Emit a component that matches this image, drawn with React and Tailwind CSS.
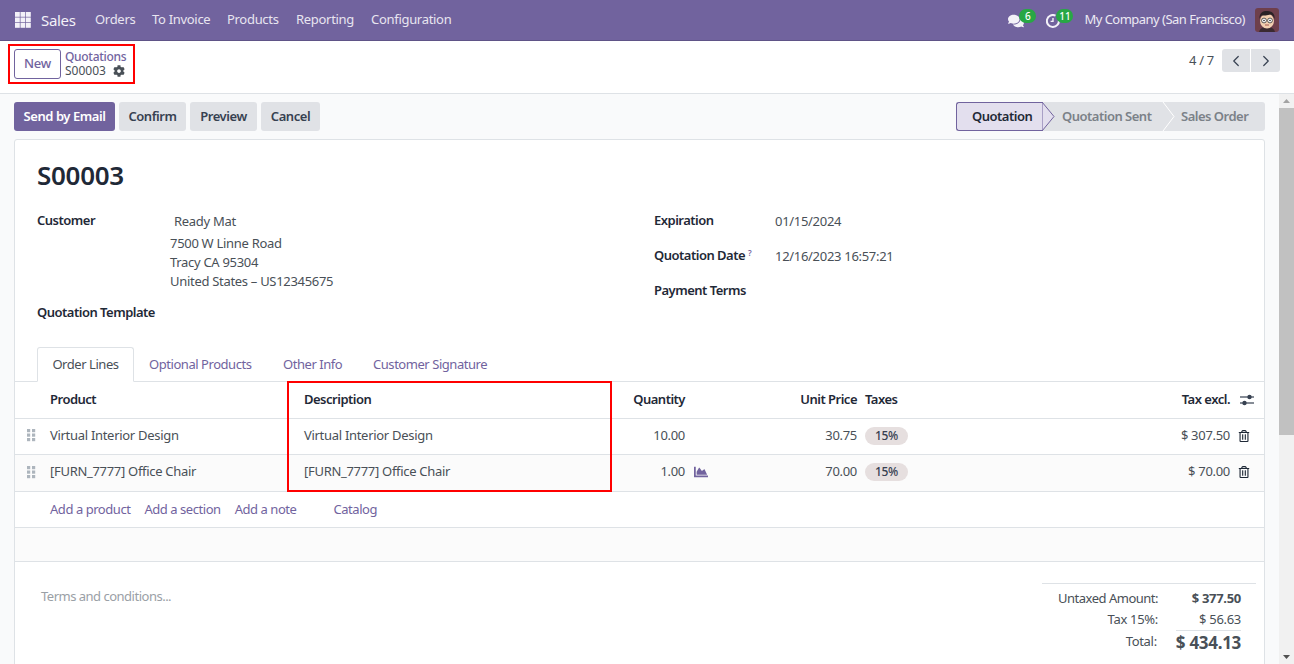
import { ChevronLeft, ChevronRight } from 'lucide-react'
import { FaCog, FaComments, FaRegTrashAlt, FaChartArea } from 'react-icons/fa'

function AppsIcon() {
  return (
    <svg width="16" height="16" viewBox="0 0 16 16" fill="#f3f1f8">
      {[0, 5.5, 11].map((y) =>
        [0, 5.5, 11].map((x) => <rect key={`${x}-${y}`} x={x} y={y} width="4.8" height="4.8" />)
      )}
    </svg>
  )
}

function DragHandle() {
  return (
    <svg width="9" height="13" viewBox="0 0 9 13" fill="#adb5bd" className="block">
      {[0, 4.5, 9].map((y) =>
        [0, 5].map((x) => <rect key={`${x}-${y}`} x={x} y={y} width="3.2" height="3.2" />)
      )}
    </svg>
  )
}

function ClockIcon() {
  return (
    <svg width="14" height="14" viewBox="0 0 14 14" fill="none" stroke="#f3f1f8" strokeWidth="2" className="block">
      <path d="M9.5 1.6A6 6 0 1 0 12.8 6" />
      <path d="M7 4v3.4H4.6" strokeWidth="1.4" />
    </svg>
  )
}

function SlidersIcon() {
  return (
    <svg width="14" height="12" viewBox="0 0 14 12" fill="#374151" className="block">
      <rect x="0" y="2.400" width="14" height="1.200" />
      <rect x="0" y="8.400" width="14" height="1.200" />
      <circle cx="9.500" cy="3" r="2.200" />
      <circle cx="4.500" cy="9" r="2.200" />
    </svg>
  )
}

function Avatar() {
  return (
    <svg width="24" height="24" viewBox="0 0 24 24" className="rounded-[3px]">
      <rect width="24" height="24" fill="#6e3f4c" />
      <path d="M4 24c1-4 4-5 8-5s7 1 8 5z" fill="#3a2a30" />
      <ellipse cx="12" cy="13" rx="7" ry="7.5" fill="#f2cfb0" />
      <path d="M4.5 11C4 4 9 2.5 13 3c5 .3 7 4 6.5 8-1-2.500-2-4-4-4.500-3 1-7 1-9 1-1 .8-1.500 2-2 3.500z" fill="#2a2226" />
      <circle cx="9" cy="12.500" r="2.400" fill="#fff" stroke="#333" strokeWidth=".8" />
      <circle cx="15" cy="12.500" r="2.400" fill="#fff" stroke="#333" strokeWidth=".8" />
      <circle cx="9" cy="12.500" r=".8" fill="#222" />
      <circle cx="15" cy="12.500" r=".8" fill="#222" />
      <path d="M10 17h4" stroke="#a5574f" strokeWidth="1" />
    </svg>
  )
}

function Badge({ children, className }) {
  return (
    <span className={`absolute rounded-full bg-[#28a745] text-white text-[10px] leading-[14px] h-[14px] w-[17px] text-center font-medium tracking-normal ${className}`}>
      {children}
    </span>
  )
}

function NavBar() {
  return (
    <header className="h-[41px] shrink-0 bg-[#71639e] border-b border-[#5f5387] flex items-center text-white">
      <div className="pl-[15px] pr-[10px]"><AppsIcon /></div>
      <span className="text-[15px] text-[#f3f1f8] w-[54px]">Sales</span>
      <nav className="flex text-[13px] text-[#e8e5f0]">
        <span className="w-[57px]">Orders</span>
        <span className="w-[75px]">To Invoice</span>
        <span className="w-[69px]">Products</span>
        <span className="w-[75px]">Reporting</span>
        <span>Configuration</span>
      </nav>
      <div className="ml-auto flex items-center text-[13px] text-[#ece9f3]">
        <span className="relative mr-[22px] text-[#f3f1f8] mt-[1px]">
          <FaComments size={16} className="block" />
          <Badge className="left-[11px] -top-[4px]">6</Badge>
        </span>
        <span className="relative mr-[24px] mt-[2px]">
          <ClockIcon />
          <Badge className="left-[10px] -top-[5px]">11</Badge>
        </span>
        <span className="mr-[10px] tracking-[-0.52px]">My Company (San Francisco)</span>
        <span className="mr-[15px] flex"><Avatar /></span>
      </div>
    </header>
  )
}

function ControlPanel() {
  return (
    <div className="h-[53px] shrink-0 bg-white border-b border-[#dee2e6] flex items-start pl-[8px] pr-[14px] pt-[3px]">
      <div className="h-[40px] w-[127px] border-[2px] border-[#f00] flex items-center pl-[4px]">
        <button className="h-[30px] w-[47px] rounded-[3px] border border-[#71639e] bg-white text-[#71639e] text-[13px] font-medium">New</button>
        <div className="ml-[4px] text-[12px] leading-[14px]">
          <div className="text-[#71639e] font-medium">Quotations</div>
          <div className="flex items-center text-[#495057] tracking-normal">
            S00003 <FaCog size={12} className="ml-[7px] text-[#495057]" />
          </div>
        </div>
      </div>
      <div className="ml-auto flex items-center mt-[5px] text-[13px] text-[#495057]">
        <span className="mr-[8px]">4 / 7</span>
        <button className="w-[29px] h-[23px] bg-[#e0e2e6] rounded-l-[3px] flex items-center justify-center border-r border-white">
          <ChevronLeft size={18} strokeWidth={1.6} className="text-[#374151]" />
        </button>
        <button className="w-[29px] h-[23px] bg-[#e0e2e6] rounded-r-[3px] flex items-center justify-center">
          <ChevronRight size={18} strokeWidth={1.6} className="text-[#374151]" />
        </button>
      </div>
    </div>
  )
}

function ActionBar() {
  const btn = 'h-[29px] rounded-[3px] text-[13px] font-semibold tracking-[-0.45px] bg-[#e0e2e6] text-[#374151]'
  return (
    <div className="flex items-center justify-between h-[29px]">
      <div className="flex gap-[4px]">
        <button className="h-[29px] w-[101px] rounded-[3px] text-[13px] font-semibold tracking-[-0.45px] bg-[#71639e] text-white">Send by Email</button>
        <button className={`${btn} w-[67px]`}>Confirm</button>
        <button className={`${btn} w-[67px]`}>Preview</button>
        <button className={`${btn} w-[59px]`}>Cancel</button>
      </div>
      <div className="flex h-[29px] w-[309px] rounded-[3px] bg-[#e0e2e6] text-[13px] font-semibold tracking-[-0.5px] text-[#7b8188]">
        <div className="relative w-[87px] bg-[#e3dfee] border border-[#71639e] border-r-0 rounded-l-[3px] flex items-center pl-[15px] text-[#1f2937]">
          Quotation
          <svg width="13" height="29" viewBox="0 0 13 29" className="absolute -right-[12px] -top-[1px]">
            <path d="M0 0 L12 14.500 L0 29 Z" fill="#e3dfee" stroke="#71639e" />
          </svg>
        </div>
        <div className="relative flex items-center pl-[19px] w-[132px]">
          Quotation Sent
          <svg width="13" height="29" viewBox="0 0 13 29" className="absolute right-0 top-0">
            <path d="M1 0 L12 14.500 L1 29" fill="none" stroke="#fff" />
          </svg>
        </div>
        <div className="flex items-center pl-[6px]">Sales Order</div>
      </div>
    </div>
  )
}

function OrderHeader() {
  const label = 'text-[13px] font-semibold tracking-[-0.5px] text-[#1f2937]'
  return (
    <div className="flex pl-[22px] text-[13px] text-[#495057]">
      <div className="w-[617px]">
        <div className="flex items-start">
          <span className={`${label} w-[133px] -mt-[1px]`}>Customer</span>
          <div className="leading-[19px]">
            <div className="pl-[4px] h-[22px]">Ready Mat</div>
            <div>7500 W Linne Road</div>
            <div>Tracy CA 95304</div>
            <div>United States – US12345675</div>
          </div>
        </div>
        <div className={`${label} mt-[12px]`}>Quotation Template</div>
      </div>
      <div className="-mt-[1px] flex flex-col gap-[15px]">
        <div className="flex items-start h-[20px]">
          <span className={`${label} w-[121px]`}>Expiration</span>
          <span className="mt-[1px]">01/15/2024</span>
        </div>
        <div className="flex items-start h-[20px]">
          <span className={`${label} w-[121px]`}>Quotation Date <sup className="text-[#71639e] text-[8px] leading-none">?</sup></span>
          <span className="mt-[1px]">12/16/2023 16:57:21</span>
        </div>
        <div className={`${label} h-[20px]`}>Payment Terms</div>
      </div>
    </div>
  )
}

function Tabs() {
  return (
    <div className="mt-[24px] h-[35px] border-b border-[#dee2e6] flex items-end pl-[22px] text-[13px] text-[#71639e] tracking-[-0.45px]">
      <div className="h-[35px] w-[97px] -mb-[1px] pt-[2px] border border-[#dee2e6] border-b-white bg-white rounded-t-[3px] flex items-center justify-center text-[#495057]">Order Lines</div>
      <div className="h-[34px] pt-[2px] flex items-center pl-[15px] w-[149px]">Optional Products</div>
      <div className="h-[34px] pt-[2px] flex items-center w-[90px]">Other Info</div>
      <div className="h-[34px] pt-[2px] flex items-center">Customer Signature</div>
    </div>
  )
}

function LineRow({ product, qty, price, total, forecast, stripe, height }) {
  return (
    <tr className={`${height} border-b border-[#dee2e6] ${stripe ? 'bg-[#fbfbfb]' : ''} text-[#495057] [&>td]:pb-[2px]`}>
      <td className="pl-[12px]"><DragHandle /></td>
      <td className="pl-[7px]">{product}</td>
      <td className="pl-[10px]">{product}</td>
      <td className="text-right">{qty}</td>
      <td className="pl-[9px]">{forecast && <FaChartArea size={14} className="text-[#71639e]" />}</td>
      <td className="text-right">{price}</td>
      <td className="pl-[8px]">
        <span className="inline-flex h-[18px] w-[43px] items-center justify-center rounded-full bg-[#e6dfdf] text-[12px] font-medium text-[#374151]">15%</span>
      </td>
      <td className="text-right">{total}</td>
      <td className="pl-[8px]"><FaRegTrashAlt size={12} className="text-[#1f2937]" /></td>
    </tr>
  )
}

function OrderLines() {
  return (
    <div className="relative">
      <table className="w-full table-fixed border-collapse text-[13px]">
        <colgroup>
          <col className="w-[28px]" />
          <col className="w-[251px]" />
          <col className="w-[303px]" />
          <col className="w-[88px]" />
          <col className="w-[28px]" />
          <col className="w-[144px]" />
          <col className="w-[70px]" />
          <col />
          <col className="w-[34px]" />
        </colgroup>
        <thead>
          <tr className="h-[37px] border-b border-[#dee2e6] text-[#1f2937] tracking-[-0.5px]">
            <th />
            <th className="pl-[7px] text-left font-semibold">Product</th>
            <th className="pl-[10px] text-left font-semibold">Description</th>
            <th className="text-right font-semibold">Quantity</th>
            <th />
            <th className="text-right font-semibold">Unit Price</th>
            <th className="pl-[8px] text-left font-semibold">Taxes</th>
            <th className="text-right font-semibold">Tax excl.</th>
            <th className="pl-[10px]"><SlidersIcon /></th>
          </tr>
        </thead>
        <tbody>
          <LineRow height="h-[36px]" product="Virtual Interior Design" qty="10.00" price="30.75" total="$ 307.50" />
          <LineRow height="h-[37px]" product="[FURN_7777] Office Chair" qty="1.00" price="70.00" total="$ 70.00" forecast stripe />
          <tr className="h-[36px] border-b border-[#dee2e6] text-[#71639e] tracking-[-0.45px]">
            <td />
            <td colSpan={8} className="pl-[7px]">
              <span className="mr-[14px]">Add a product</span>
              <span className="mr-[14px]">Add a section</span>
              <span className="mr-[37px]">Add a note</span>
              <span>Catalog</span>
            </td>
          </tr>
        </tbody>
      </table>
      {/* annotation box from the screenshot */}
      <div className="absolute left-[272px] -top-[1px] h-[111px] w-[325px] border-[2px] border-[#f00] pointer-events-none" />
    </div>
  )
}

function Totals() {
  return (
    <div className="w-[214px] mr-[8px] border-t border-[#dee2e6] pt-[4px] pr-[15px] text-[13px] text-[#495057]">
      <div className="flex h-[21px] items-center">
        <span className="w-[116px] text-right tracking-[-0.5px]">Untaxed Amount:</span>
        <span className="flex-1 text-right font-bold">$ 377.50</span>
      </div>
      <div className="flex h-[21px] items-center">
        <span className="w-[116px] text-right">Tax 15%:</span>
        <span className="flex-1 text-right">$ 56.63</span>
      </div>
      <div className="flex h-[24px] items-center">
        <span className="w-[116px] text-right">Total:</span>
        <span className="ml-[19px] flex-1 border-t border-[#dee2e6] text-right text-[17px] font-bold leading-[23px] whitespace-nowrap">$ 434.13</span>
      </div>
    </div>
  )
}

function Scrollbar() {
  return (
    <div className="w-[15px] shrink-0 bg-[#f1f1f1] flex flex-col items-center">
      <svg width="9" height="14" viewBox="0 0 9 14" className="shrink-0"><path d="M1 9l3.500-4 3.500 4z" fill="#a3a3a3" /></svg>
      <div className="h-[327px] w-full bg-[#c1c1c1]" />
      <svg width="9" height="14" viewBox="0 0 9 14" className="mt-auto shrink-0"><path d="M1 5l3.500 4 3.500-4z" fill="#505050" /></svg>
    </div>
  )
}

export default function App() {
  return (
    <div className="h-screen overflow-hidden flex flex-col bg-[#f9fafb] font-['Noto_Sans',sans-serif] tracking-[-0.3px]">
      <NavBar />
      <ControlPanel />
      <div className="flex flex-1 min-h-0">
        <main className="flex-1 min-w-0 overflow-hidden pl-[14px] pr-[14px] pt-[8px]">
          <ActionBar />
          <div className="mt-[8px] bg-white border border-[#dee2e6] rounded-t-[3px] pb-[40px]">
            <h1 className="pl-[22px] pt-[18px] h-[72px] text-[26px] leading-[34px] font-semibold text-[#1f2937]">S00003</h1>
            <OrderHeader />
            <Tabs />
            <OrderLines />
            <div className="h-[34px] bg-[#fbfbfb] border-b border-[#dee2e6]" />
            <div className="flex justify-between pt-[21px]">
              <span className="pl-[26px] pt-[4px] text-[13px] text-[#9aa0a6] tracking-[-0.5px]">Terms and conditions...</span>
              <Totals />
            </div>
          </div>
        </main>
        <Scrollbar />
      </div>
    </div>
  )
}
